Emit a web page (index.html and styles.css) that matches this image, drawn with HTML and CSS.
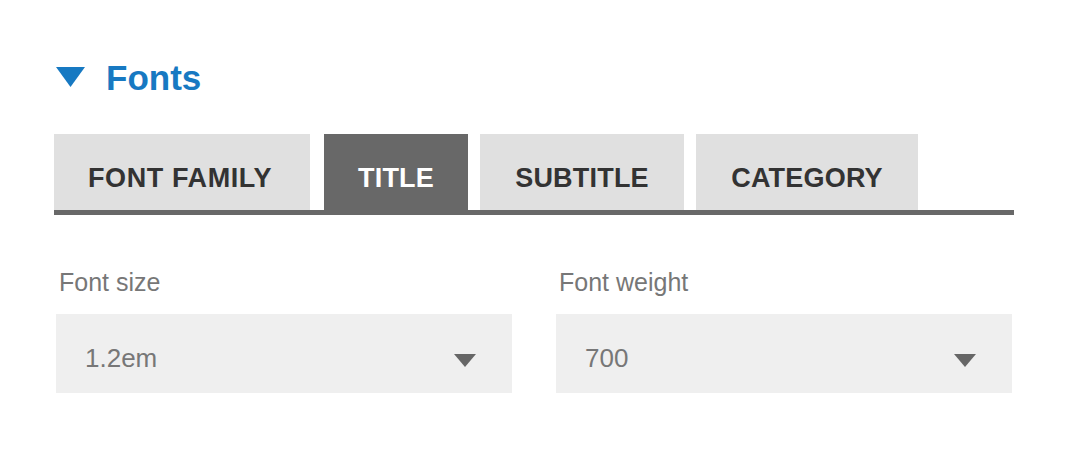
FILE: index.html
```html
<!DOCTYPE html>
<html lang="en">
<head>
<meta charset="utf-8">
<title>Fonts</title>
<link rel="stylesheet" href="styles.css">
</head>
<body>
<section class="panel">
  <h2 class="panel-header">
    <svg class="caret" width="29" height="20" viewBox="0 0 29 20" aria-hidden="true"><polygon points="0,0 29,0 14.5,20" fill="#1779c2"/></svg>
    <span>Fonts</span>
  </h2>
  <nav class="tabs">
    <span class="tab tab-family">FONT FAMILY</span>
    <span class="tab tab-title active">TITLE</span>
    <span class="tab tab-subtitle">SUBTITLE</span>
    <span class="tab tab-category">CATEGORY</span>
  </nav>
  <div class="fields">
    <div class="field">
      <div class="label">Font size</div>
      <div class="select">
        <span class="value">1.2em</span>
        <svg class="arrow" width="22" height="13" viewBox="0 0 22 13" aria-hidden="true"><polygon points="0,0 22,0 11,13" fill="#666666"/></svg>
      </div>
    </div>
    <div class="field">
      <div class="label">Font weight</div>
      <div class="select">
        <span class="value">700</span>
        <svg class="arrow" width="22" height="13" viewBox="0 0 22 13" aria-hidden="true"><polygon points="0,0 22,0 11,13" fill="#666666"/></svg>
      </div>
    </div>
  </div>
</section>
</body>
</html>
```
FILE: styles.css
```css
* { box-sizing: border-box; }
html, body { margin: 0; padding: 0; background: #ffffff; }
body { font-family: "Liberation Sans", Arial, Helvetica, sans-serif; }

.panel {
  width: 960px;
  margin-left: 54px;
  padding-top: 58px;
}

.panel-header {
  display: flex;
  align-items: center;
  gap: 21px;
  margin: 0;
  padding-left: 2px;
  height: 40px;
  font-size: 35px;
  line-height: 40px;
  font-weight: 700;
  color: #1779c2;
}
.caret { display: block; margin-top: -3px; }

.tabs {
  display: flex;
  gap: 12px;
  margin-top: 36px;
  border-bottom: 5px solid #686868;
}
.tab {
  display: block;
  height: 76px;
  padding-top: 12px;
  line-height: 64px;
  font-size: 27px;
  font-weight: 700;
  text-align: center;
  color: #333333;
  background: #e0e0e0;
  white-space: nowrap;
  letter-spacing: 0.2px;
}
.tab-family { width: 256px; margin-right: 2px; padding-right: 4px; letter-spacing: 0.6px; }
.tab-title { width: 144px; }
.tab-subtitle { width: 204px; }
.tab-category { width: 222px; }
.tab.active { background: #686868; color: #ffffff; }

.fields {
  display: grid;
  grid-template-columns: 456px 456px;
  column-gap: 44px;
  padding: 0 2px;
  margin-top: 52px;
}
.label {
  font-size: 25px;
  line-height: 30px;
  color: #777777;
  padding-left: 3px;
  margin-bottom: 17px;
}
.select {
  display: flex;
  justify-content: space-between;
  align-items: center;
  height: 79px;
  padding: 9px 36px 0 29px;
  background: #efefef;
}
.value {
  font-size: 26px;
  line-height: 70px;
  color: #777777;
}
.arrow { display: block; margin-top: 5px; }
```
